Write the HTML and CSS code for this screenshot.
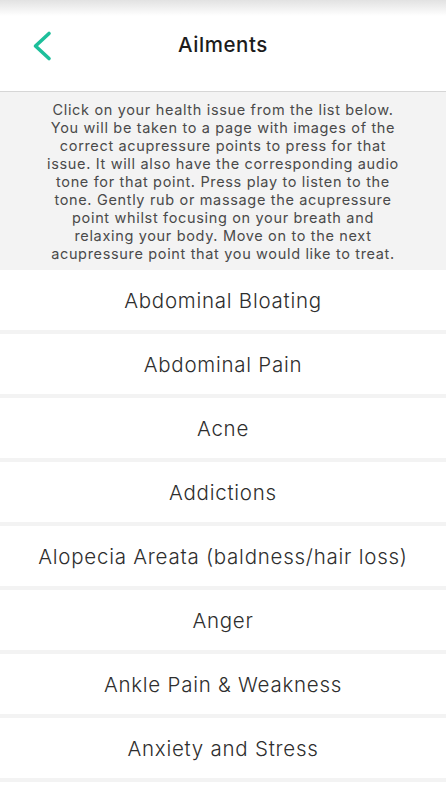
FILE: index.html
```html
<!DOCTYPE html>
<html>
<head>
<meta charset="utf-8">
<link rel="stylesheet" href="styles.css">
</head>
<body>
<div class="app">
  <div class="statusfade"></div>
  <header class="header">
    <button class="back" aria-label="Back">
      <svg width="24" height="36" viewBox="0 0 24 36"><path d="M19 5.5 L5.5 18 L19 30.5" fill="none" stroke="#1dbf9b" stroke-width="3.6" stroke-linecap="round" stroke-linejoin="round"/></svg>
    </button>
    <h1 class="title">Ailments</h1>
  </header>
  <p class="intro">Click on your health issue from the list below.<br>You will be taken to a page with images of the<br>correct acupressure points to press for that<br>issue. It will also have the corresponding audio<br>tone for that point. Press play to listen to the<br>tone. Gently rub or massage the acupressure<br>point whilst focusing on your breath and<br>relaxing your body. Move on to the next<br>acupressure point that you would like to treat.</p>
  <ul class="list">
    <li class="item">Abdominal Bloating</li>
    <li class="item">Abdominal Pain</li>
    <li class="item">Acne</li>
    <li class="item">Addictions</li>
    <li class="item">Alopecia Areata (baldness/hair loss)</li>
    <li class="item">Anger</li>
    <li class="item">Ankle Pain &amp; Weakness</li>
    <li class="item">Anxiety and Stress</li>
  </ul>
</div>
</body>
</html>
```
FILE: styles.css
```css
html, body {
  margin: 0;
  padding: 0;
  background: #ffffff;
}
body {
  font-family: Inter, "Open Sans", sans-serif;
  overflow: hidden;
  height: 795px;
}
.app {
  width: 446px;
  display: flex;
  flex-direction: column;
}
.statusfade {
  height: 16px;
  background: linear-gradient(to bottom, #e2e2e2, #ffffff);
}
.header {
  height: 75px;
  display: flex;
  align-items: center;
  justify-content: center;
  position: relative;
  border-bottom: 1px solid #d6d6d6;
  background: #fff;
}
.back {
  position: absolute;
  left: 30px;
  top: 12px;
  background: none;
  border: 0;
  padding: 0;
  width: 24px;
  height: 36px;
}
.back svg { display: block; }
.title {
  margin: 0 0 18px 0;
  font-size: 20.5px;
  font-weight: 500;
  color: #1c1c1c;
  letter-spacing: 0.55px;
}
.intro {
  margin: 0;
  background: #f3f3f3;
  padding: 9px 10px 7px 10px;
  text-align: center;
  font-size: 14.5px;
  line-height: 18px;
  font-weight: 400;
  color: #4a4a4a;
  letter-spacing: 0.66px;
  white-space: nowrap;
}
.list {
  list-style: none;
  margin: 0;
  padding: 0 0 4px 0;
  background: #f3f3f3;
  display: flex;
  flex-direction: column;
  gap: 4px;
}
.item {
  height: 60px;
  background: #fff;
  display: flex;
  align-items: center;
  justify-content: center;
  font-size: 20.5px;
  font-weight: 300;
  color: #2e2e2e;
  letter-spacing: 0.75px;
}
```
